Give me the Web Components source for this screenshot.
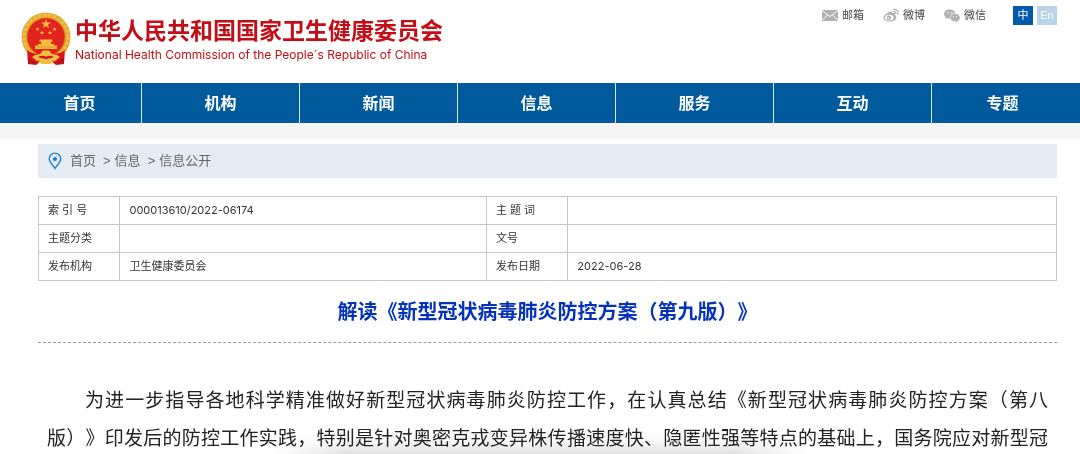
<!DOCTYPE html>
<html lang="zh-CN">
<head>
<meta charset="utf-8">
<meta name="viewport" content="width=device-width, initial-scale=1">
<title>解读《新型冠状病毒肺炎防控方案（第九版）》</title>
<style>
  html { scrollbar-width: none; background: #fff; }
  body {
    margin: 0; color: #333;
    font-family: "Liberation Sans", "Noto Sans CJK SC", sans-serif;
    text-spacing-trim: space-all;
  }
  main { display: block; margin: 0 23px 0 38px; }
</style>
</head>
<body>
<nhc-header></nhc-header>
<nhc-nav></nhc-nav>
<main>
  <nhc-breadcrumb></nhc-breadcrumb>
  <nhc-meta></nhc-meta>
  <nhc-article>
    <span slot="title">解读《新型冠状病毒肺炎防控方案（第九版）》</span>
    <span slot="body">为进一步指导各地科学精准做好新型冠状病毒肺炎防控工作，在认真总结《新型冠状病毒肺炎防控方案（第八版）》印发后的防控工作实践，特别是针对奥密克戎变异株传播速度快、隐匿性强等特点的基础上，国务院应对新型冠</span>
  </nhc-article>
</main>
<nhc-dock-shadow></nhc-dock-shadow>

<script>
const define = (name, html) => {
  const template = document.createElement('template');
  template.innerHTML = html;
  customElements.define(name, class extends HTMLElement {
    constructor() {
      super();
      this.attachShadow({ mode: 'open' }).append(template.content.cloneNode(true));
    }
  });
};

define('nhc-emblem', `
<style>:host { display: block; flex: none; width: 50px; height: 54px } svg { display: block }</style>
<svg width="50" height="54" viewBox="0 0 50 54" role="img" aria-label="国徽">
  <path d="M6 37 L13 44 37 44 44 37 43 52 35 53 30 49 20 49 15 53 7 52Z" fill="#c8141d"/>
  <circle cx="25" cy="25" r="24.500" fill="#e6ab32"/>
  <circle cx="25" cy="25" r="22" fill="none" stroke="#efbf48" stroke-width="2.500" stroke-dasharray="3 2"/>
  <circle cx="25" cy="25" r="19" fill="#e3231e" stroke="#c98418" stroke-width=".6"/>
  <g fill="#f2bd3e">
    <path d="M25 7l1.200 3.500h3.800l-3 2.200 1.100 3.600-3.100-2.200-3.100 2.200 1.100-3.600-3-2.200h3.800z"/>
    <path d="M16.500 15l.6 1.500h1.700l-1.300 1 .5 1.600-1.500-1-1.400 1 .5-1.600-1.300-1h1.600zM33.500 15l.6 1.500h1.700l-1.300 1 .5 1.600-1.500-1-1.400 1 .5-1.600-1.300-1h1.600zM21 18.500l.6 1.500h1.700l-1.300 1 .5 1.600-1.500-1-1.400 1 .5-1.600-1.300-1h1.600zM29 18.500l.6 1.500h1.700l-1.300 1 .5 1.600-1.500-1-1.400 1 .5-1.600-1.300-1h1.600z"/>
    <path d="M19 27.500h12l1 2H18zM20 29.500h10v2.500H20zM17 32h16v1.500h3v3.500H14v-3.500h3z"/>
  </g>
  <path d="M14 35h22" stroke="#d88f20" stroke-width=".6"/>
  <path d="M6 38q5 4 12 4l4-3h6l4 3q7 0 12-4l-2 9q-4 4-9 3l-4-3h-8l-4 3q-5 1-9-3z" fill="#d9151c"/>
  <path d="M19 42l3-3.500h6l3 3.500 5 1 3 2-5 4-6-1-3-3-3 3-6 1-5-4 3-2z" fill="#efbf43"/>
  <path d="M17 45q5-2.500 8 0 3-2.500 8 0-4 2-8 1.500-4 .5-8-1.500z" fill="#d9151c"/>
  <path d="M7 47l6 4M43 47l-6 4" stroke="#8e0e14" stroke-width="1"/>
  <path d="M17 50l3-2h10l3 2-4 2h-8z" fill="#efbf43"/>
</svg>`);

define('nhc-header', `
<style>
  :host { display: flex; justify-content: space-between; align-items: flex-start; height: 83px; padding: 0 23px 0 21px; box-sizing: border-box }
  .brand { display: flex; gap: 4px; padding-top: 12px; color: #c30d17; text-decoration: none }
  .names { display: flex; flex-direction: column }
  .zh { font: 700 23px/34px "Noto Sans CJK SC", sans-serif; white-space: nowrap }
  .en { font: 400 12px/18px Inter, sans-serif; white-space: nowrap }
  .tools { display: flex; align-items: center; height: 20px; padding-top: 5px; gap: 19px; font-size: 11px; line-height: 20px }
  .tools a { display: flex; align-items: center; gap: 4px; color: #444; text-decoration: none }
  svg { display: block }
  .lang { display: flex; gap: 4px; margin-left: 8px }
  button { width: 20px; height: 19px; padding: 0; border: 0; background: #b8d3e7; color: #fff; font: 11px/19px "Liberation Sans", "Noto Sans CJK SC", sans-serif }
  button.on { background: #0059a9 }
</style>
<a class="brand" href="#">
  <nhc-emblem></nhc-emblem>
  <span class="names">
    <span class="zh">中华人民共和国国家卫生健康委员会</span>
    <span class="en">National Health Commission of the People´s Republic of China</span>
  </span>
</a>
<div class="tools">
  <a href="#"><svg width="16" height="16" viewBox="0 0 16 16"><path d="M0 3h16v11H0z" fill="#b1b1b1"/><path d="M0 3.500l8 6 8-6M0 13.500l5.500-5.500M16 13.500l-5.500-5.500" fill="none" stroke="#fff" stroke-width="1"/></svg>邮箱</a>
  <a href="#"><svg width="16" height="16" viewBox="0 0 16 16"><path d="M6.500 5C8 4.200 9.500 4.500 9.200 6.300c2-.7 3.500 0 2.700 1.600 3 1.400 1.500 6.600-5.400 6.600C2.500 14.500.5 12.800.5 10.800.5 8.800 3.500 5.800 6.500 5z" fill="#b1b1b1"/><ellipse cx="6.300" cy="10.600" rx="4.300" ry="2.900" fill="#fff"/><circle cx="6" cy="10.700" r="2.200" fill="#b1b1b1"/><circle cx="5.500" cy="11" r=".7" fill="#fff"/><path d="M10.500 2.500c3-.6 5.200 1.800 4.300 4.800M10.800 4.700c1.500-.2 2.300.7 2 2" fill="none" stroke="#b1b1b1" stroke-width="1.200" stroke-linecap="round"/></svg>微博</a>
  <a href="#"><svg width="16" height="16" viewBox="0 0 16 16"><path d="M5.800 2.500C2.600 2.500 0 4.500 0 7.100c0 1.500.8 2.700 2.100 3.600L1.600 12.300l2-1c.8.200 1.600.3 2.400.3-.5-3.500 2.200-5.600 5.500-5.500C11 4 8.700 2.500 5.800 2.500z" fill="#b1b1b1"/><path d="M11 6.800c-2.800 0-4.700 1.700-4.700 3.800 0 2.200 2 3.900 4.700 3.900.6 0 1.200-.1 1.700-.3l1.700.9-.4-1.500c1.200-.7 1.900-1.800 1.900-3 0-2.100-2.200-3.800-4.900-3.800z" fill="#b1b1b1"/><circle cx="4" cy="5.700" r=".7" fill="#fff"/><circle cx="7.700" cy="5.700" r=".7" fill="#fff"/><circle cx="9.500" cy="9.600" r=".6" fill="#fff"/><circle cx="12.500" cy="9.600" r=".6" fill="#fff"/></svg>微信</a>
  <div class="lang"><button class="on" type="button">中</button><button type="button">En</button></div>
</div>`);

define('nhc-nav', `
<style>
  :host { display: block; background: #005a9b; border-bottom: 16px solid #f5f5f5; margin-bottom: 5px }
  nav { display: grid; grid-template-columns: 124fr repeat(5, 158fr) 141fr; padding: 0 7px 0 18px }
  a { padding-bottom: 2px; color: #fff; font: 700 16px/38px "Noto Sans CJK SC", sans-serif; text-align: center; text-decoration: none }
  a:not(:last-child) { border-right: 1px solid #d8e6f0 }
</style>
<nav><a href="#">首页</a><a href="#">机构</a><a href="#">新闻</a><a href="#">信息</a><a href="#">服务</a><a href="#">互动</a><a href="#">专题</a></nav>`);

define('nhc-breadcrumb', `
<style>
  :host { display: block; background: #e4ebf2 }
  nav { display: flex; align-items: center; padding-left: 10px; color: #666; font-size: 13px; line-height: 34px }
  svg { display: block; margin-right: 8px }
  a { color: inherit; text-decoration: none }
  i { font-style: normal; margin: 0 4px 0 7px }
</style>
<nav aria-label="当前位置">
  <svg width="14" height="18" viewBox="0 0 14 18"><path d="M7 16.500C5 13.200 1.300 10.300 1.300 6.800a5.700 5.700 0 0 1 11.400 0C12.700 10.300 9 13.200 7 16.500z" fill="none" stroke="#1b7fd0" stroke-width="1.400"/><circle cx="7" cy="7" r="2.100" fill="#1b7fd0"/></svg>
  <a href="#">首页</a><i>&gt;</i><a href="#">信息</a><i>&gt;</i><a href="#">信息公开</a>
</nav>`);

define('nhc-meta', `
<style>
  :host { display: block; margin-top: 18px }
  table { width: 100%; table-layout: fixed; border-collapse: collapse; font: 11px/16px Inter, "Noto Sans CJK SC", sans-serif; color: #333 }
  th, td { height: 26px; box-sizing: content-box; padding: 0 9px 1px; border: 1px solid #c6c6c6; text-align: left; font-weight: 400 }
  col.k { width: 8% } col.v { width: 36% }
</style>
<table>
  <colgroup><col class="k"><col class="v"><col class="k"><col></colgroup>
  <tr><th scope="row">索 引 号</th><td>000013610/2022-06174</td><th scope="row">主 题 词</th><td></td></tr>
  <tr><th scope="row">主题分类</th><td></td><th scope="row">文号</th><td></td></tr>
  <tr><th scope="row">发布机构</th><td>卫生健康委员会</td><th scope="row">发布日期</th><td>2022-06-28</td></tr>
</table>`);

define('nhc-article', `
<style>
  :host { display: block }
  h1 { margin: 0; padding: 15px 0 16px; border-bottom: 1px dashed #999; text-align: center; color: #0432bd; font: 700 20px/30px "Noto Sans CJK SC", sans-serif }
  p { margin: 0; padding: 37px 9px 0; font: 19px/38px "Noto Sans CJK SC", sans-serif; color: #222; text-indent: 2em; text-align: justify; text-align-last: justify }
</style>
<article><h1><slot name="title"></slot></h1><p><slot name="body"></slot></p></article>`);

define('nhc-dock-shadow', `
<style>
  :host { position: fixed; z-index: -1; left: 25%; right: 25%; bottom: 0; height: 24px; pointer-events: none;
    background: linear-gradient(transparent, rgb(0 0 0 / .03) 50%, rgb(0 0 0 / .12));
    mask-image: linear-gradient(90deg, transparent, #000 15%, #000 85%, transparent) }
</style>`);
</script>
</body>
</html>
